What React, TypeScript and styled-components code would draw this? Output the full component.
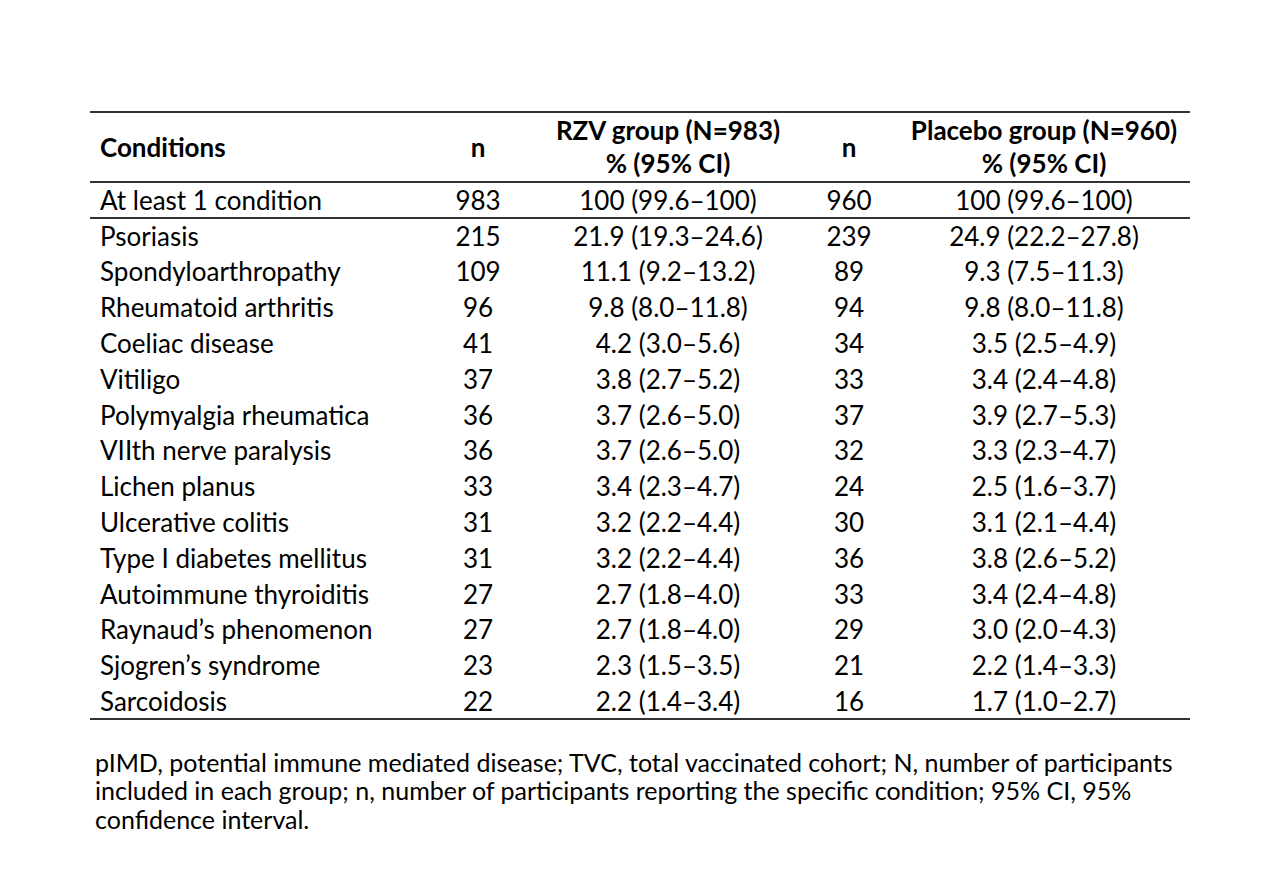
import React from "react";
import styled, { createGlobalStyle } from "styled-components";

const Global = createGlobalStyle`
  html, body { margin: 0; padding: 0; background: #fff; }
  body { font-family: Lato, "Open Sans", "Liberation Sans", sans-serif; color: #000; }
`;

const Page = styled.div`
  width: 1280px;
  height: 896px;
  box-sizing: border-box;
  padding: 111px 0 0 90px;
  background: #fff;
`;

const Table = styled.table`
  width: 1100px;
  border-collapse: collapse;
  table-layout: fixed;
  font-size: 26px;
  border-top: 2px solid #333;
  border-bottom: 2px solid #333;
`;

const HeadRow = styled.tr`
  height: 70px;
  border-bottom: 2px solid #333;
`;

const Th = styled.th<{ $left?: boolean }>`
  font-weight: 700;
  text-align: ${(p) => (p.$left ? "left" : "center")};
  padding: ${(p) => (p.$left ? "0 0 0 10px" : "0")};
  line-height: 33px;
  vertical-align: middle;
  white-space: nowrap;
`;

const Row = styled.tr<{ $divider?: boolean }>`
  height: 35.8px;
  border-bottom: ${(p) => (p.$divider ? "2px solid #333" : "none")};
`;

const Td = styled.td<{ $left?: boolean }>`
  text-align: ${(p) => (p.$left ? "left" : "center")};
  padding: ${(p) => (p.$left ? "0 0 0 10px" : "0")};
  vertical-align: middle;
  line-height: 30px;
  white-space: nowrap;
`;

const Note = styled.p`
  margin: 28px 0 0 5px;
  width: 1090px;
  font-size: 25px;
  line-height: 28.5px;
`;

const rows: [string, string, string, string, string][] = [
  ["At least 1 condition", "983", "100 (99.6–100)", "960", "100 (99.6–100)"],
  ["Psoriasis", "215", "21.9 (19.3–24.6)", "239", "24.9 (22.2–27.8)"],
  ["Spondyloarthropathy", "109", "11.1 (9.2–13.2)", "89", "9.3 (7.5–11.3)"],
  ["Rheumatoid arthritis", "96", "9.8 (8.0–11.8)", "94", "9.8 (8.0–11.8)"],
  ["Coeliac disease", "41", "4.2 (3.0–5.6)", "34", "3.5 (2.5–4.9)"],
  ["Vitiligo", "37", "3.8 (2.7–5.2)", "33", "3.4 (2.4–4.8)"],
  ["Polymyalgia rheumatica", "36", "3.7 (2.6–5.0)", "37", "3.9 (2.7–5.3)"],
  ["VIIth nerve paralysis", "36", "3.7 (2.6–5.0)", "32", "3.3 (2.3–4.7)"],
  ["Lichen planus", "33", "3.4 (2.3–4.7)", "24", "2.5 (1.6–3.7)"],
  ["Ulcerative colitis", "31", "3.2 (2.2–4.4)", "30", "3.1 (2.1–4.4)"],
  ["Type I diabetes mellitus", "31", "3.2 (2.2–4.4)", "36", "3.8 (2.6–5.2)"],
  ["Autoimmune thyroiditis", "27", "2.7 (1.8–4.0)", "33", "3.4 (2.4–4.8)"],
  ["Raynaud’s phenomenon", "27", "2.7 (1.8–4.0)", "29", "3.0 (2.0–4.3)"],
  ["Sjogren’s syndrome", "23", "2.3 (1.5–3.5)", "21", "2.2 (1.4–3.3)"],
  ["Sarcoidosis", "22", "2.2 (1.4–3.4)", "16", "1.7 (1.0–2.7)"],
];

export default function App() {
  return (
    <Page>
      <Global />
      <Table>
        <colgroup>
          <col style={{ width: 330 }} />
          <col style={{ width: 116 }} />
          <col style={{ width: 264 }} />
          <col style={{ width: 98 }} />
          <col style={{ width: 292 }} />
        </colgroup>
        <thead>
          <HeadRow>
            <Th $left>Conditions</Th>
            <Th>n</Th>
            <Th>
              RZV group (N=983)
              <br />% (95% CI)
            </Th>
            <Th>n</Th>
            <Th>
              Placebo group (N=960)
              <br />% (95% CI)
            </Th>
          </HeadRow>
        </thead>
        <tbody>
          {rows.map((r, i) => (
            <Row key={r[0]} $divider={i === 0}>
              <Td $left>{r[0]}</Td>
              <Td>{r[1]}</Td>
              <Td>{r[2]}</Td>
              <Td>{r[3]}</Td>
              <Td>{r[4]}</Td>
            </Row>
          ))}
        </tbody>
      </Table>
      <Note>
        pIMD, potential immune mediated disease; TVC, total vaccinated cohort; N, number of participants
        included in each group; n, number of participants reporting the specific condition; 95% CI, 95%
        confidence interval.
      </Note>
    </Page>
  );
}
